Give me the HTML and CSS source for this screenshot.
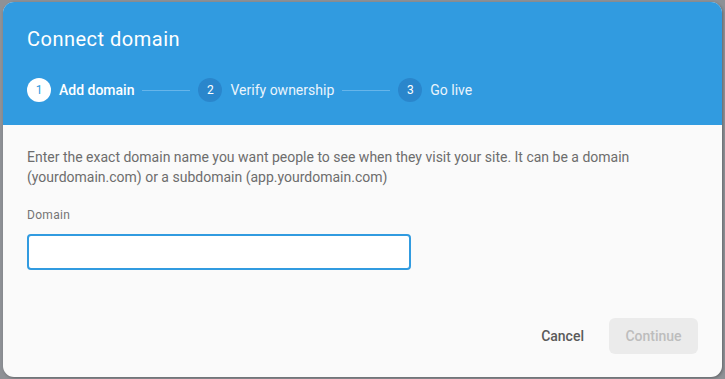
FILE: index.html
```html
<!DOCTYPE html>
<html>
<head>
<meta charset="utf-8">
<link rel="stylesheet" href="styles.css">
</head>
<body>
<div class="dialog">
  <div class="header">
    <div class="title">Connect domain</div>
    <div class="steps">
      <div class="step active"><span class="num">1</span><span class="label">Add domain</span></div>
      <span class="line"></span>
      <div class="step"><span class="num">2</span><span class="label">Verify ownership</span></div>
      <span class="line"></span>
      <div class="step"><span class="num">3</span><span class="label">Go live</span></div>
    </div>
  </div>
  <div class="content">
    <p class="desc">Enter the exact domain name you want people to see when they visit your site. It can be a domain (yourdomain.com) or a subdomain (app.yourdomain.com)</p>
    <label class="field-label">Domain</label>
    <input class="input" type="text">
    <div class="footer">
      <button class="btn cancel">Cancel</button>
      <button class="btn continue">Continue</button>
    </div>
  </div>
</div>
</body>
</html>
```
FILE: styles.css
```css
html, body {
  margin: 0;
  padding: 0;
}
body {
  background: #8e9196;
  width: 725px;
  height: 379px;
  overflow: hidden;
  font-family: Roboto, "Liberation Sans", sans-serif;
}
.dialog {
  margin: 2px 3px;
  width: 719px;
  height: 375px;
  border-radius: 11px;
  background: #fafafa;
  overflow: hidden;
  display: flex;
  flex-direction: column;
  box-shadow: 1px 1px 3px rgba(0,0,0,0.3);
}
.header {
  background: #319be0;
  height: 123px;
  box-sizing: border-box;
  padding: 25px 24px 0 24px;
  color: #fff;
}
.title {
  font-size: 20px;
  line-height: 24px;
  font-weight: 400;
  letter-spacing: 0.5px;
}
.steps {
  display: flex;
  align-items: center;
  margin-top: 27px;
  height: 24px;
}
.step {
  display: flex;
  align-items: center;
}
.num {
  width: 24px;
  height: 24px;
  border-radius: 50%;
  background: #2a86cc;
  color: #fff;
  font-size: 12px;
  display: flex;
  align-items: center;
  justify-content: center;
}
.step.active .num {
  background: #fff;
  color: #319be0;
}
.label {
  margin-left: 8px;
  font-size: 14px;
  color: #eaf4fc;
}
.step.active .label {
  font-weight: 500;
  color: #fff;
}
.line {
  width: 48px;
  height: 1px;
  background: #66b5ea;
  margin: 0 8px;
}
.content {
  flex: 1;
  display: flex;
  flex-direction: column;
  padding: 22px 24px 23px 24px;
}
.desc {
  margin: 0;
  font-size: 14px;
  line-height: 20px;
  color: #6d6d6d;
  max-width: 660px;
}
.field-label {
  margin-top: 20px;
  font-size: 12px;
  line-height: 16px;
  letter-spacing: 0.3px;
  color: #757575;
}
.input {
  margin-top: 11px;
  width: 384px;
  height: 36px;
  box-sizing: border-box;
  border: 2px solid #319be0;
  border-radius: 4px;
  background: #fff;
  outline: none;
}
.footer {
  margin-top: auto;
  display: flex;
  justify-content: flex-end;
  align-items: center;
  gap: 8px;
}
.btn {
  height: 36px;
  border: none;
  border-radius: 6px;
  font-family: Roboto, "Liberation Sans", sans-serif;
  font-size: 14px;
  font-weight: 500;
  padding: 0 16px;
  background: transparent;
}
.cancel {
  color: #5a5a5a;
  padding: 0 17px 0 15px;
}
.continue {
  background: #ebebeb;
  color: #bdbdbd;
  width: 89px;
}
```
